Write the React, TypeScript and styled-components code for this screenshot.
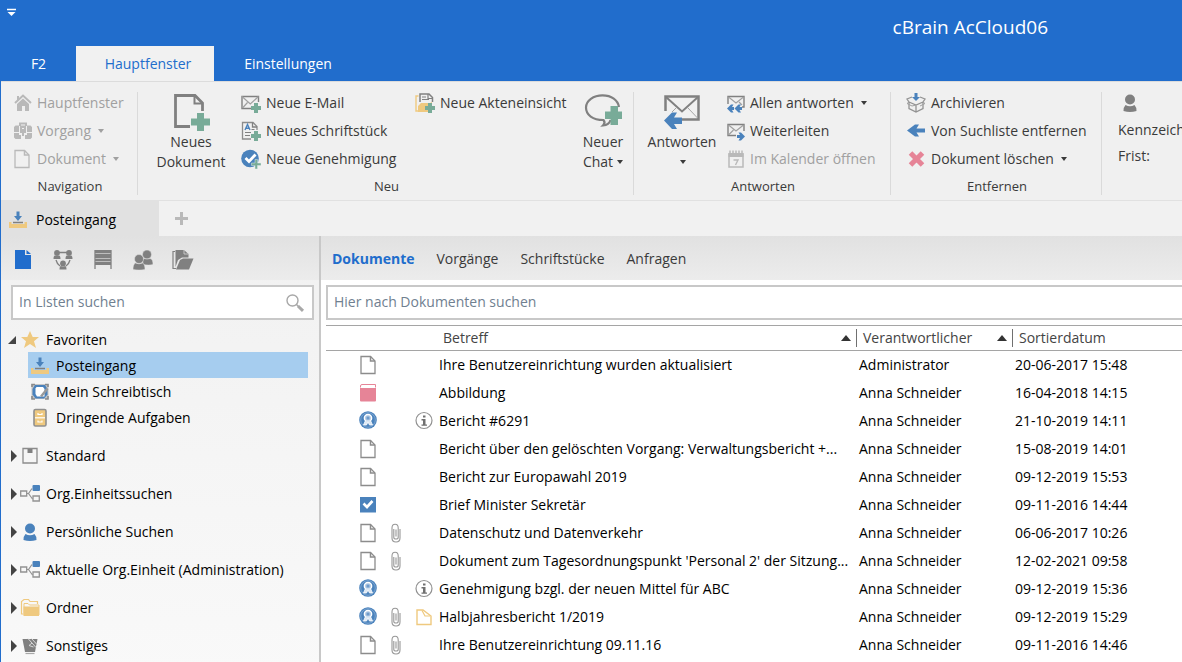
import React from "react";
import styled, { createGlobalStyle } from "styled-components";

const GRAY = "#808080";
const MUTED = "#b9b9b9";
const BLUE = "#4a82bc";
const GREEN = "#78ab98";
const YELLOW = "#efc97f";
const PINK = "#e68497";
const BRAND = "#216dcc";

const GlobalStyle = createGlobalStyle`
  *, *::before, *::after { box-sizing: border-box; }
  body {
    margin: 0;
    font-family: "Open Sans", "Noto Sans", sans-serif;
    font-size: 14px;
    line-height: 20px;
    color: #000;
    background: #fff;
  }
  button, input, table { font: inherit; color: inherit; }
  button { border: 0; padding: 0; background: none; cursor: pointer; }
  ul { list-style: none; margin: 0; padding: 0; }
  svg { display: block; flex: none; }
`;

/* ---------- Icons ---------- */

type SvgProps = { w?: number; h?: number; children: React.ReactNode };
const Svg = ({ w = 20, h = 20, children }: SvgProps) => (
  <svg width={w} height={h} viewBox={`0 0 ${w} ${h}`} fill="none" aria-hidden="true">
    {children}
  </svg>
);

const SmallPlus = () => <path d="M13 10h4v3h3v4h-3v3h-4v-3h-3v-4h3z" fill={GREEN} />;

const HomeIcon = () => (
  <Svg w={18}>
    <path d="M1 10 9 2.5 17 10" stroke={MUTED} strokeWidth="2" />
    <path d="M3 3h2v4L3 9z" fill={MUTED} />
    <path d="M3 11 9 5.500 15 11v7h-4v-5H8v5H3z" fill={MUTED} />
  </Svg>
);
const CaseIcon = () => (
  <Svg w={18}>
    <path d="M6 5V2.500h6V5" stroke={MUTED} strokeWidth="2" />
    <path d="M1.500 4.500H5V11H0V6zM13 4.500h3.500L18 6v5h-5zM0 12h5v2h2v4H1.500L0 16.500zM18 12h-5v2h-2v4h5.500l1.500-1.500z" fill={MUTED} />
    <path d="M6 4.500h6V12h-2V7H8v5H6z" fill={MUTED} />
    <path d="M8 8h2v7H8z" fill={MUTED} />
  </Svg>
);
const PageIcon = ({ color = "#8c8c8c", w = 16 }: { color?: string; w?: number }) => (
  <Svg w={w}>
    <path d="M1 1.500h9.500L15 6v12.500H1z" stroke={color} strokeWidth="1.300" />
    <path d="M10.500 1.500V6H15" stroke={color} strokeWidth="1.500" />
  </Svg>
);
const NewDocumentIcon = () => (
  <Svg w={40} h={40}>
    <path d="M19 34.500H4.500V3.500H24L31.500 11v8" stroke={GRAY} strokeWidth="2.800" />
    <path d="M23.500 3.500V11.500h8" stroke={GRAY} strokeWidth="2" />
    <path d="M26 21h7v5.500h6v7h-6V39h-7v-5.500h-6v-7h6z" fill={GREEN} />
  </Svg>
);
const NewMailIcon = () => (
  <Svg>
    <path d="M10 15.500H1V3.500h16.500V9" stroke={GRAY} strokeWidth="1.400" />
    <path d="M1 3.500 9.300 11 17.500 3.500M1.500 15 6.500 9.500" stroke="#a0a0a0" strokeWidth="1.200" />
    <SmallPlus />
  </Svg>
);
const NewLetterIcon = () => (
  <Svg>
    <path d="M10 18H1.500V1.500h10.500L16 5.500V9" stroke="#8c8c8c" strokeWidth="1.300" />
    <path d="M11.500 1.500V6H16" stroke={GRAY} strokeWidth="1.300" />
    <path d="M4 9 6.500 3.500 9 9M5 7.200h3" stroke={BLUE} strokeWidth="1.400" />
    <path d="M4 11.500h6M4 14.500h5M10.500 8.500h3" stroke={GRAY} strokeWidth="1.200" />
    <SmallPlus />
  </Svg>
);
const NewApprovalIcon = () => (
  <Svg>
    <circle cx="9" cy="9.500" r="8.800" fill={BLUE} />
    <path d="M4.500 9 8 12.500l6.500-7" stroke="#fff" strokeWidth="2.800" />
    <path d="M14 10.500h2.500V14H20v2.500h-3.500V20H14v-3.500h-3.500V14H14z" fill={GREEN} stroke="#dce9e4" strokeWidth=".5" />
  </Svg>
);
const NewFileViewIcon = () => (
  <Svg>
    <path d="M3.500 3H1v15h3" stroke={YELLOW} strokeWidth="1.400" />
    <path d="M3 19V13l3-3h9l2-1v5l-4 5z" fill={YELLOW} />
    <path d="M5 9V1h9l3.500 3.500V9" stroke={GRAY} strokeWidth="1.500" />
    <path d="M13 1v4.500h4.500M7 4h4M7 6.500h7" stroke={GRAY} strokeWidth="1.200" />
    <SmallPlus />
  </Svg>
);
const NewChatIcon = () => (
  <Svg w={38} h={40}>
    <path
      d="M35 15C34 8 27.500 3.300 18.500 3.300S2 8.500 2 15.500c0 7.600 6.800 12.500 17.500 12.500 1.500 1.800 1.500 3.500-.5 5.500 4-.3 6.500-2 7.500-5.500"
      stroke={GRAY}
      strokeWidth="2.200"
    />
    <path d="M26.500 14H34v5.500h5V27h-5v6h-7.500v-6H21v-7.500h5.500z" fill={GREEN} />
  </Svg>
);
const ReplyIcon = () => (
  <Svg w={36} h={40}>
    <path d="M18 27.500h16.500V4.500h-33V19" stroke={GRAY} strokeWidth="2.500" />
    <path d="M2 5 18 19.500 34 5" stroke={GRAY} strokeWidth="2" />
    <path d="m24 16 9.500 10M12 16l-4 4" stroke="#a5a5a5" strokeWidth="1" />
    <path d="M0 28.500 8 20.500h5l-3 5h8v6.500h-8l3 5H8z" fill={BLUE} />
  </Svg>
);
const ReplyAllIcon = () => (
  <Svg w={18}>
    <path d="M15 14h2V3.500H1V11" stroke={GRAY} strokeWidth="1.400" />
    <path d="M1.500 4 9 10 16.500 4M12 9l3 3" stroke="#a0a0a0" strokeWidth="1.200" />
    <path d="m0 15.500 4-4h2.500L5 14h2v3H5l1.500 2.500H4zM7.500 15.500l4-4H14L12.500 14H15v3h-2.500l1.500 2.500h-2.500z" fill={BLUE} />
  </Svg>
);
const ForwardIcon = () => (
  <Svg w={18}>
    <path d="M9 14.500H1V3.500h16V10" stroke={GRAY} strokeWidth="1.400" />
    <path d="M1.500 4 9 10 16.500 4M1.500 14 6.500 9" stroke="#a0a0a0" strokeWidth="1.200" />
    <path d="m18 15.500-4-4h-2.500L13 14h-3v3h3l-1.500 2.500H14z" fill={BLUE} />
  </Svg>
);
const CalendarIcon = () => (
  <Svg w={18}>
    <path d="M2 5h14v13H2z" stroke={MUTED} strokeWidth="1.500" />
    <path d="M1.500 4h15v4h-15z" fill={MUTED} />
    <path d="M3 1.500v4M6 1.500v4M9 1.500v4M12 1.500v4M15 1.500v4" stroke={MUTED} strokeWidth="1.500" />
    <path d="M6.500 11h4.500L8.500 16" stroke={MUTED} strokeWidth="1.400" />
  </Svg>
);
const ArchiveIcon = () => (
  <Svg>
    <path d="M3 9v6.500l7 3.500 7-3.500V9M3 9l7 3 7-3M10 12v7M3 9 1 6l5-2M17 9l2-3-5-2" stroke="#929292" strokeWidth="1.300" />
    <path d="M3 9 1 10.500 6 13l4-1M17 9l2 1.500-5 2.500" stroke="#a0a0a0" strokeWidth="1" />
    <path d="M8.500 0h3v4H14l-4 4-4-4h2.500z" fill={BLUE} />
  </Svg>
);
const LeftArrowIcon = () => (
  <Svg>
    <path d="m1 9.500 8-6h4L10.500 7.500H19v4h-8.500l2.500 4H9z" fill={BLUE} />
  </Svg>
);
const DeleteIcon = () => (
  <Svg>
    <path d="m4.500 4 12 12M16.500 4l-12 12" stroke={PINK} strokeWidth="5" />
  </Svg>
);
const PersonIcon = ({ color = GRAY }: { color?: string }) => (
  <Svg w={16}>
    <circle cx="8" cy="6.500" r="5" fill={color} />
    <path d="M3.500 12q4.500 2.500 9 0 2 2 2 6-6.500 2-13 0 0-4 2-6z" fill={color} />
  </Svg>
);
const InboxIcon = () => (
  <Svg w={18}>
    <path d="M0 12h2.500v2h13v-2H18v6H0z" fill={YELLOW} />
    <path d="M4 12.500h10" stroke={GRAY} strokeWidth="1.500" />
    <path d="M7.500 1.500h3V6H13l-4 5-4-5h2.500z" fill={BLUE} />
  </Svg>
);
const AddIcon = () => (
  <Svg w={13} h={13}>
    <path d="M5 0h3v5h5v3H8v5H5V8H0V5h5z" fill="#b9b9b9" />
  </Svg>
);
const FilledPageIcon = () => (
  <Svg w={18} h={22}>
    <path d="M1 1h10v5h6v14H1z" fill={BRAND} />
    <path d="M12.500 1 17 5h-4.500z" fill={BRAND} />
  </Svg>
);
const NetworkIcon = () => (
  <Svg w={20} h={22}>
    <path d="M6 3.500h8M3 11q1 4 4 6M17 11q-1 4-4 6" stroke={GRAY} strokeWidth="1.300" />
    {[[4, 4], [16, 4], [10, 14.500]].map(([x, y]) => (
      <g key={`${x}-${y}`} fill={GRAY}>
        <circle cx={x} cy={y} r="2.900" />
        <path d={`M${x - 3.500} ${y + 6}q0-3.500 1.500-3.500 2 1 4 0 1.500 0 1.500 3.500z`} />
      </g>
    ))}
  </Svg>
);
const ArchiveShelfIcon = () => (
  <Svg w={18} h={22}>
    <path d="M1 1h16v15H1z" fill={GRAY} />
    <path d="M1 1v19M17 1v19" stroke={GRAY} strokeWidth="1.300" />
    <path d="M1.500 4.500h15M1.500 9.500h15M1.500 12.500h15" stroke="#bdbdbd" />
  </Svg>
);
const PeopleIcon = () => (
  <Svg w={20} h={22}>
    <g fill={GRAY} stroke="#e5e5e5" strokeWidth=".5">
      <circle cx="14" cy="5.500" r="4.500" />
      <path d="M10 15.500q-1-5 1-6 3 1.200 6 0 3 .5 3 6-4 1.200-10 0z" />
      <circle cx="6" cy="10" r="4.500" />
      <path d="M0 20.500q0-5.500 2.500-6.500 3.500 1.700 7 0 2.500 1 2.500 6.500-6 1.200-12 0z" />
    </g>
  </Svg>
);
const OpenFolderIcon = () => (
  <Svg w={22} h={22}>
    <path d="M3 2.500H1V19.500h3" stroke={GRAY} strokeWidth="1.200" />
    <path d="M3.500 18V1H12l4.500 4v3.500H10L6 11z" fill={GRAY} />
    <path d="M12 1v4h4.500" stroke="#d5d5d5" strokeWidth=".8" />
    <path d="m4 20.500 4-9.500 3-1.500h10.500L17 20.500z" fill={GRAY} />
  </Svg>
);
const SearchIcon = () => (
  <Svg>
    <circle cx="7.500" cy="7.500" r="5.500" stroke="#a8a8a8" strokeWidth="1.400" />
    <path d="m11.500 11.500 2 2" stroke="#a8a8a8" strokeWidth="1.400" />
    <path d="m13 13 5 4.800" stroke="#a8a8a8" strokeWidth="3" />
  </Svg>
);
const StarIcon = () => (
  <Svg>
    <path d="m10 1 2.700 6H19l-5 4.300 2 6.700-6-4-6 4 2-6.700L1 7h6.300z" fill={YELLOW} />
  </Svg>
);
const DeskIcon = () => (
  <Svg w={18}>
    <path d="M.500 2h17v15H.500z" fill="#c4c4c4" />
    <path d="M1 5V2.500h3M14 2.500h3V5M1 14v3h3M17 14v3h-3" stroke="#8a8a8a" strokeWidth="1.600" />
    <path d="M4 3h10l2.500 4v5.500L13 16.500H4.500l-3-4V7z" fill={BLUE} />
    <path d="M5.500 5h6.500l1.500 2v7.500H6L4.500 12V6.500z" fill="#fff" />
    <path d="m10 14.500 6.500-8" stroke="#9a9a9a" strokeWidth="2.400" />
  </Svg>
);
const CabinetIcon = () => (
  <Svg w={18}>
    <rect x="3" y="1.500" width="12" height="16.500" rx="1.500" fill={YELLOW} stroke="#909090" strokeWidth="1.600" />
    <path d="M4 9.800h10" stroke="#fff" strokeWidth="1.200" />
    <path d="M7 5V6.500h4V5M7 12.500V14h4v-1.500" stroke="#fff" strokeWidth="1.200" />
  </Svg>
);
const BoxIcon = () => (
  <Svg>
    <path d="M3 2.500h14v14.500H3z" stroke="#8c8c8c" strokeWidth="1.300" />
    <path d="M7.500 3h5v4h-5z" fill={GRAY} />
  </Svg>
);
const OrgIcon = () => (
  <Svg>
    <path d="M.7 7h6v5h-6z" stroke="#929292" strokeWidth="1.300" />
    <path d="M7 9.500h1.500L12 4.500M8.500 9.500l4 5.500" stroke="#929292" strokeWidth="1.200" />
    <rect x="12.500" y="1" width="7.500" height="6" rx="1" fill={BLUE} />
    <path d="M13 12h6.300v5H13z" stroke="#929292" strokeWidth="1.300" />
  </Svg>
);
const FoldersIcon = () => (
  <Svg>
    <path d="M3 16H1.500V3.500L4 1.500h4.500L10 3.500h7.500V6" stroke={YELLOW} strokeWidth="1.200" />
    <path d="M4 17V5.500h4L9.500 7h9.500v10" stroke={YELLOW} strokeWidth="1" />
    <path d="M3.500 8.500h15.500v9.500h-15.500z" fill={YELLOW} />
  </Svg>
);
const MiscIcon = () => (
  <Svg>
    <path d="M2.500 3h15L15 16H5z" fill={GRAY} />
    <path d="m8 2.500 8 9M11.500 2.500l5.500 6M12 7l-3 2.500 4.500 1.500" stroke="#dadada" strokeWidth="1" />
    <path d="M5.500 17.500h9" stroke="#a8a8a8" strokeWidth="1.200" />
  </Svg>
);
const BookIcon = () => (
  <Svg w={16}>
    <path d="M.500 4.500V3q0-1.500 1.500-1.500h13.500v3" stroke={PINK} strokeWidth="1" />
    <path d="M0 5h16v12.500q0 1-1 1H1q-1 0-1-1z" fill={PINK} />
  </Svg>
);
const SealIcon = () => (
  <Svg w={18}>
    <circle cx="9" cy="9" r="8.800" fill={BLUE} />
    <circle cx="9" cy="9" r="7.300" stroke="#86acd4" strokeWidth=".8" />
    <circle cx="9" cy="7" r="3.600" fill="#a9c4e1" stroke="#fff" strokeWidth="1.500" />
    <path d="m6.500 9.500-2 4.500h3l1.500-3 1.500 3h3l-2-4.500" fill="#dce7f3" stroke="#fff" strokeWidth=".8" />
    <circle cx="9" cy="7" r="1.500" fill="#6f9bcb" />
  </Svg>
);
const TaskIcon = () => (
  <Svg w={16}>
    <path d="M0 2h16v15.500H0z" fill={BLUE} />
    <path d="m3.500 8.500 3.500 3.500 5.500-6" stroke="#fff" strokeWidth="2.600" />
  </Svg>
);
const ClipIcon = () => (
  <Svg w={10}>
    <path
      d="M2.800 6v8.500q0 1.500 2.200 1.500t2.200-1.500V5q0-3.800-3.100-3.800T1 5v10q0 4 4 4t4-4V6M5 6.500v7"
      stroke="#979797"
      strokeWidth="1.100"
    />
  </Svg>
);
const InfoIcon = () => (
  <Svg w={18}>
    <circle cx="9" cy="9.500" r="8" stroke="#929292" strokeWidth="1.200" />
    <path d="M8 4.500h2.500v2H8zM6.500 8h4v5.500H12v1.300H6.500v-1.300H8v-4H6.500z" fill="#707070" />
  </Svg>
);
const NoteIcon = () => (
  <Svg w={16}>
    <path d="M1 3h6l8 6v8.500H1z" stroke={YELLOW} strokeWidth="1.400" />
    <path d="M6 3.500 9 9h5" stroke={YELLOW} strokeWidth="1.200" />
  </Svg>
);

/* ---------- Shell ---------- */

const Shell = styled.div`
  min-height: 100vh;
  display: flex;
  flex-direction: column;
  overflow: hidden;
  border-left: 1px solid ${BRAND};
`;

const Header = styled.header`
  display: flex;
  flex-direction: column;
  background: ${BRAND};
  color: #fff;
`;

const TitleBar = styled.div`
  display: flex;
  justify-content: space-between;
  align-items: flex-start;
  height: 46px;
  padding: 8px 134px 0 5px;
`;

const AppTitle = styled.h1`
  margin: 0;
  padding-top: 6px;
  font-size: 19px;
  line-height: 26px;
  font-weight: 400;
`;

const MenuTabs = styled.nav`
  display: flex;
  height: 35px;
`;

const MenuTab = styled.button<{ $width: number; $active?: boolean }>`
  width: ${(p) => p.$width}px;
  padding-left: ${(p) => (p.$active ? 6 : 0)}px;
  white-space: nowrap;
  color: ${(p) => (p.$active ? BRAND : "#fff")};
  background: ${(p) => (p.$active ? "#f1f1f1" : "transparent")};
`;

/* ---------- Ribbon ---------- */

const Ribbon = styled.div`
  display: flex;
  overflow: hidden;
  background: #f0f0f0;
  border-top: 1px solid #dcdcdc;
  color: #3a3a3a;
`;

const Group = styled.section<{ $width: number }>`
  flex: none;
  width: ${(p) => p.$width}px;
  padding-top: 7px;
`;

const GroupBody = styled.div<{ $indent?: number }>`
  display: flex;
  height: 84px;
  padding-left: ${(p) => p.$indent ?? 0}px;
`;

const GroupLabel = styled.div`
  height: 27px;
  padding-left: 2px;
  line-height: 27px;
  font-size: 13px;
  text-align: center;
`;

const Divider = styled.div`
  flex: none;
  width: 1px;
  margin: 10px 0 5px;
  background: #dadada;
`;

const Column = styled.div<{ $width?: number; $indent?: number }>`
  flex: none;
  width: ${(p) => (p.$width ? `${p.$width}px` : "auto")};
  padding-left: ${(p) => p.$indent ?? 0}px;
`;

const Command = styled.button`
  display: flex;
  align-items: center;
  gap: 5px;
  height: 28px;
  white-space: nowrap;
  &:disabled {
    color: #a0a0a0;
    cursor: default;
  }
`;

const LargeCommand = styled.button<{ $width: number }>`
  flex: none;
  display: flex;
  flex-direction: column;
  align-items: center;
  width: ${(p) => p.$width}px;
  padding-top: 3px;
`;

const LargeLine = styled.span`
  display: flex;
  align-items: center;
  gap: 2px;
  height: 20px;
`;

const Caret = styled.span`
  margin-left: 2px;
  border: 3px solid transparent;
  border-top: 4px solid currentColor;
  border-bottom: 0;
`;

const Field = styled.div`
  height: 26px;
  line-height: 26px;
  white-space: nowrap;
`;

const FieldIcon = styled.div`
  display: flex;
  align-items: center;
  height: 28px;
  padding-left: 4px;
`;

/* ---------- Open lists strip ---------- */

const Strip = styled.div`
  display: flex;
  height: 36px;
  background: #f1f1f1;
`;

const StripTab = styled.button`
  display: flex;
  align-items: center;
  gap: 9px;
  width: 158px;
  padding-left: 8px;
  padding-top: 3px;
  background: #e1e1e1;
`;

const StripRest = styled.div`
  flex: 1;
  display: flex;
  align-items: center;
  padding-left: 16px;
  border-top: 1px solid #e1e1e1;
`;

/* ---------- Body ---------- */

const Body = styled.div`
  flex: 1;
  display: flex;
  min-width: 0;
`;

const Sidebar = styled.aside`
  flex: none;
  width: 320px;
  border-right: 2px solid #c8c8c8;
  background: linear-gradient(#f1f1f1, #f9f9f9);
`;

const Toolbar = styled.div<{ $gap: number; $indent: number }>`
  display: flex;
  align-items: center;
  gap: ${(p) => p.$gap}px;
  height: 44px;
  padding: 2px 0 0 ${(p) => p.$indent}px;
  background: linear-gradient(#e1e1e1, #ececec);
`;

const ToolButton = styled.button`
  display: flex;
  justify-content: center;
  width: 22px;
  padding-top: 2px;
`;

const SearchBox = styled.label`
  display: flex;
  align-items: center;
  height: 35px;
  padding: 0 7px 0 6px;
  border: 2px solid #c8c8c8;
  background: #fff;
`;

const SidebarSearch = styled(SearchBox)`
  margin: 5px 5px 0 10px;
`;

const MainSearch = styled(SearchBox)`
  margin: 5px 0;
  border-right: 0;
`;

const SearchInput = styled.input`
  flex: 1;
  min-width: 0;
  padding: 0 0 2px;
  border: 0;
  outline: 0;
  background: transparent;
  &::placeholder {
    color: #708090;
    opacity: 1;
  }
`;

const Tree = styled.ul`
  padding: 6px 11px 6px 7px;
`;

const TreeGroup = styled.li`
  margin-bottom: 12px;
`;

const TreeRow = styled.button`
  display: flex;
  align-items: center;
  width: 100%;
  height: 26px;
  padding-top: 1px;
  white-space: nowrap;
`;

const TreeText = styled.span`
  padding-left: 6px;
`;

const TreeIcon = styled.span<{ $width?: number }>`
  display: flex;
  justify-content: center;
  width: 20px;
`;

const Toggle = styled.span<{ $open?: boolean }>`
  width: 12px;
  display: flex;
  justify-content: ${(p) => (p.$open ? "flex-start" : "center")};
`;

const TreeLeaf = styled(TreeRow)<{ $selected?: boolean }>`
  padding-left: 2px;
  background: ${(p) => (p.$selected ? "#a6cdef" : "transparent")};
`;

const Children = styled.ul`
  padding-left: 20px;
`;

const Main = styled.main`
  flex: 1;
  min-width: 0;
  background: #fff;
`;

const Content = styled.div`
  padding-left: 5px;
`;

const ListTab = styled.button<{ $active?: boolean }>`
  color: ${(p) => (p.$active ? BRAND : "#3a3a3a")};
  font-weight: ${(p) => (p.$active ? 700 : 400)};
`;

const Table = styled.table`
  width: 100%;
  table-layout: fixed;
  border-collapse: separate;
  border-spacing: 0;
  white-space: nowrap;
`;

const HeadCell = styled.th`
  height: 26px;
  padding: 0;
  border-top: 1px solid #a5a5a5;
  border-bottom: 1px solid #a5a5a5;
  font-weight: 400;
  text-align: left;
  color: #444;
`;

const HeadInner = styled.div<{ $sorted?: boolean }>`
  display: flex;
  align-items: center;
  justify-content: space-between;
  height: 18px;
  padding: 0 5px 0 6px;
  border-right: ${(p) => (p.$sorted ? "1px solid #707070" : "0")};
`;

const SortMark = styled.span`
  border: 5px solid transparent;
  border-bottom: 6px solid #333;
  border-top: 0;
`;

const Cell = styled.td`
  height: 28px;
  padding: 0 0 0 2px;
`;

const IconCell = styled.td`
  padding: 0;
  & > svg {
    margin: 0 auto;
  }
`;

/* ---------- Data ---------- */

const groups = [
  { label: "Standard", icon: <BoxIcon /> },
  { label: "Org.Einheitssuchen", icon: <OrgIcon /> },
  { label: "Persönliche Suchen", icon: <PersonIcon color={BLUE} /> },
  { label: "Aktuelle Org.Einheit (Administration)", icon: <OrgIcon /> },
  { label: "Ordner", icon: <FoldersIcon /> },
  { label: "Sonstiges", icon: <MiscIcon /> },
];

const favourites = [
  { label: "Posteingang", icon: <InboxIcon />, selected: true },
  { label: "Mein Schreibtisch", icon: <DeskIcon /> },
  { label: "Dringende Aufgaben", icon: <CabinetIcon /> },
];

const kinds = {
  page: <PageIcon />,
  book: <BookIcon />,
  seal: <SealIcon />,
  task: <TaskIcon />,
};

type Row = {
  kind: keyof typeof kinds;
  clip?: boolean;
  mark?: "info" | "note";
  subject: string;
  owner: string;
  date: string;
};

const rows: Row[] = [
  { kind: "page", subject: "Ihre Benutzereinrichtung wurden aktualisiert", owner: "Administrator", date: "20-06-2017 15:48" },
  { kind: "book", subject: "Abbildung", owner: "Anna Schneider", date: "16-04-2018 14:15" },
  { kind: "seal", mark: "info", subject: "Bericht #6291", owner: "Anna Schneider", date: "21-10-2019 14:11" },
  { kind: "page", subject: "Bericht über den gelöschten Vorgang: Verwaltungsbericht +...", owner: "Anna Schneider", date: "15-08-2019 14:01" },
  { kind: "page", subject: "Bericht zur Europawahl 2019", owner: "Anna Schneider", date: "09-12-2019 15:53" },
  { kind: "task", subject: "Brief Minister Sekretär", owner: "Anna Schneider", date: "09-11-2016 14:44" },
  { kind: "page", clip: true, subject: "Datenschutz und Datenverkehr", owner: "Anna Schneider", date: "06-06-2017 10:26" },
  { kind: "page", clip: true, subject: "Dokument zum Tagesordnungspunkt 'Personal 2' der Sitzung...", owner: "Anna Schneider", date: "12-02-2021 09:58" },
  { kind: "seal", mark: "info", subject: "Genehmigung bzgl. der neuen Mittel für ABC", owner: "Anna Schneider", date: "09-12-2019 15:36" },
  { kind: "seal", clip: true, mark: "note", subject: "Halbjahresbericht 1/2019", owner: "Anna Schneider", date: "09-12-2019 15:29" },
  { kind: "page", clip: true, subject: "Ihre Benutzereinrichtung 09.11.16", owner: "Anna Schneider", date: "09-11-2016 14:46" },
];

/* ---------- Sections ---------- */

const RibbonBar = () => (
  <Ribbon>
    <Group $width={136}>
      <GroupBody $indent={13}>
        <Column>
          <Command disabled><HomeIcon />Hauptfenster</Command>
          <Command disabled><CaseIcon />Vorgang<Caret /></Command>
          <Command disabled><PageIcon color={MUTED} w={18} />Dokument<Caret /></Command>
        </Column>
      </GroupBody>
      <GroupLabel>Navigation</GroupLabel>
    </Group>
    <Divider />
    <Group $width={495}>
      <GroupBody $indent={8}>
        <LargeCommand $width={90}>
          <NewDocumentIcon />
          <LargeLine>Neues</LargeLine>
          <LargeLine>Dokument</LargeLine>
        </LargeCommand>
        <Column $width={179} $indent={5}>
          <Command><NewMailIcon />Neue E-Mail</Command>
          <Command><NewLetterIcon />Neues Schriftstück</Command>
          <Command><NewApprovalIcon />Neue Genehmigung</Command>
        </Column>
        <Column $width={158}>
          <Command><NewFileViewIcon />Neue Akteneinsicht</Command>
        </Column>
        <LargeCommand $width={60}>
          <NewChatIcon />
          <LargeLine>Neuer</LargeLine>
          <LargeLine>Chat<Caret /></LargeLine>
        </LargeCommand>
      </GroupBody>
      <GroupLabel>Neu</GroupLabel>
    </Group>
    <Divider />
    <Group $width={256}>
      <GroupBody $indent={3}>
        <LargeCommand $width={90}>
          <ReplyIcon />
          <LargeLine>Antworten</LargeLine>
          <LargeLine><Caret /></LargeLine>
        </LargeCommand>
        <Column>
          <Command><ReplyAllIcon />Allen antworten<Caret /></Command>
          <Command><ForwardIcon />Weiterleiten</Command>
          <Command disabled><CalendarIcon />Im Kalender öffnen</Command>
        </Column>
      </GroupBody>
      <GroupLabel>Antworten</GroupLabel>
    </Group>
    <Divider />
    <Group $width={210}>
      <GroupBody $indent={15}>
        <Column>
          <Command><ArchiveIcon />Archivieren</Command>
          <Command><LeftArrowIcon />Von Suchliste entfernen</Command>
          <Command><DeleteIcon />Dokument löschen<Caret /></Command>
        </Column>
      </GroupBody>
      <GroupLabel>Entfernen</GroupLabel>
    </Group>
    <Divider />
    <Group $width={136}>
      <GroupBody $indent={16}>
        <Column>
          <FieldIcon><PersonIcon /></FieldIcon>
          <Field>Kennzeichen:</Field>
          <Field>Frist:</Field>
        </Column>
      </GroupBody>
    </Group>
  </Ribbon>
);

const ListTree = () => (
  <Tree>
    <TreeGroup>
      <TreeRow>
        <Toggle $open>
          <Svg w={8} h={8}><path d="M8 0v8H0z" fill="#444" /></Svg>
        </Toggle>
        <TreeIcon><StarIcon /></TreeIcon>
        <TreeText>Favoriten</TreeText>
      </TreeRow>
      <Children>
        {favourites.map((f) => (
          <li key={f.label}>
            <TreeLeaf $selected={f.selected}>
              <TreeIcon>{f.icon}</TreeIcon>
              <TreeText>{f.label}</TreeText>
            </TreeLeaf>
          </li>
        ))}
      </Children>
    </TreeGroup>
    {groups.map((g) => (
      <TreeGroup key={g.label}>
        <TreeRow>
          <Toggle>
            <Svg w={6} h={12}><path d="M0 0 6 6 0 12z" fill="#444" /></Svg>
          </Toggle>
          <TreeIcon>{g.icon}</TreeIcon>
          <TreeText>{g.label}</TreeText>
        </TreeRow>
      </TreeGroup>
    ))}
  </Tree>
);

const Col = styled.col<{ $width?: number }>`
  width: ${(p) => (p.$width ? `${p.$width}px` : "auto")};
`;

const DocumentTable = () => (
  <Table>
    <colgroup>
      <Col $width={28} />
      <Col $width={28} />
      <Col $width={28} />
      <Col $width={27} />
      <Col $width={420} />
      <Col $width={156} />
      <Col />
    </colgroup>
    <thead>
      <tr>
        <HeadCell aria-label="Status" />
        <HeadCell aria-label="Typ" />
        <HeadCell aria-label="Anhang" />
        <HeadCell aria-label="Hinweis" />
        <HeadCell><HeadInner $sorted>Betreff<SortMark /></HeadInner></HeadCell>
        <HeadCell><HeadInner $sorted>Verantwortlicher<SortMark /></HeadInner></HeadCell>
        <HeadCell><HeadInner>Sortierdatum</HeadInner></HeadCell>
      </tr>
    </thead>
    <tbody>
      {rows.map((r) => (
        <tr key={r.subject}>
          <IconCell />
          <IconCell>{kinds[r.kind]}</IconCell>
          <IconCell>{r.clip && <ClipIcon />}</IconCell>
          <IconCell>
            {r.mark === "info" && <InfoIcon />}
            {r.mark === "note" && <NoteIcon />}
          </IconCell>
          <Cell>{r.subject}</Cell>
          <Cell>{r.owner}</Cell>
          <Cell>{r.date}</Cell>
        </tr>
      ))}
    </tbody>
  </Table>
);

export default function App() {
  return (
    <>
      <GlobalStyle />
      <Shell>
        <Header>
          <TitleBar>
            <Svg w={10} h={10}>
              <path d="M1 1.500h9" stroke="#fff" strokeWidth="1.500" />
              <path d="M1.500 4h8L5.500 8z" fill="#fff" />
            </Svg>
            <AppTitle>cBrain AcCloud06</AppTitle>
          </TitleBar>
          <MenuTabs>
            <MenuTab $width={75}>F2</MenuTab>
            <MenuTab $width={138} $active>Hauptfenster</MenuTab>
            <MenuTab $width={148}>Einstellungen</MenuTab>
          </MenuTabs>
        </Header>
        <RibbonBar />
        <Strip>
          <StripTab><InboxIcon />Posteingang</StripTab>
          <StripRest>
            <button aria-label="Neue Liste"><AddIcon /></button>
          </StripRest>
        </Strip>
        <Body>
          <Sidebar>
            <Toolbar $gap={18} $indent={11}>
              <ToolButton aria-label="Dokumente"><FilledPageIcon /></ToolButton>
              <ToolButton aria-label="Netzwerk"><NetworkIcon /></ToolButton>
              <ToolButton aria-label="Archiv"><ArchiveShelfIcon /></ToolButton>
              <ToolButton aria-label="Personen"><PeopleIcon /></ToolButton>
              <ToolButton aria-label="Ordner"><OpenFolderIcon /></ToolButton>
            </Toolbar>
            <SidebarSearch>
              <SearchInput aria-label="In Listen suchen" placeholder="In Listen suchen" />
              <SearchIcon />
            </SidebarSearch>
            <ListTree />
          </Sidebar>
          <Main>
            <Toolbar $gap={22} $indent={11}>
              <ListTab $active>Dokumente</ListTab>
              <ListTab>Vorgänge</ListTab>
              <ListTab>Schriftstücke</ListTab>
              <ListTab>Anfragen</ListTab>
            </Toolbar>
            <Content>
              <MainSearch>
                <SearchInput aria-label="Hier nach Dokumenten suchen" placeholder="Hier nach Dokumenten suchen" />
              </MainSearch>
              <DocumentTable />
            </Content>
          </Main>
        </Body>
      </Shell>
    </>
  );
}
